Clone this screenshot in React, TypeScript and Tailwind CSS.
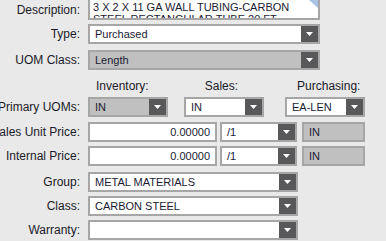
import React from 'react';

const FONT = { fontFamily: '"Liberation Sans", Arial, sans-serif' };

function Arrow() {
  return (
    <svg width="7" height="4" viewBox="0 0 7 4" className="block">
      <polygon points="0,0 7,0 3.5,4" fill="#ffffff" />
    </svg>
  );
}

function Select({ value, width, gray = false }: { value: string; width: string; gray?: boolean }) {
  return (
    <div
      className={`${width} h-[20px] flex items-stretch border-2 border-[#a6a6a6] ${gray ? 'bg-[#c0c0c0]' : 'bg-white'}`}
    >
      <div className="flex-1 flex items-center pl-[5px] text-[11px] text-[#1b1b33] whitespace-nowrap overflow-hidden">
        {value}
      </div>
      <div className="w-[17px] bg-[#58575a] flex items-center justify-center">
        <Arrow />
      </div>
    </div>
  );
}

function Field({ value, width, gray = false, right = false }: { value: string; width: string; gray?: boolean; right?: boolean }) {
  return (
    <div
      className={`${width} h-[20px] flex items-center border-2 border-[#a6a6a6] px-[5px] text-[11px] text-[#1b1b33] whitespace-nowrap overflow-hidden ${gray ? 'bg-[#c0c0c0]' : 'bg-white'} ${right ? 'justify-end' : ''}`}
    >
      {value}
    </div>
  );
}

function Row({ label, top, children }: { label: string; top: string; children: React.ReactNode }) {
  return (
    <div className={`flex items-center ${top}`}>
      <div className="w-[81px] shrink-0 flex justify-end whitespace-nowrap text-[12px] text-[#1a1a28] pr-[1px]">
        {label}
      </div>
      <div className="ml-[7px] flex items-center">{children}</div>
    </div>
  );
}

export default function App() {
  return (
    <div className="w-[386px] h-[241px] bg-[#e9e9e9] overflow-hidden" style={FONT}>
      <div className="-mt-[2px] flex flex-col">
        {/* Description */}
        <div className="flex items-center">
          <div className="w-[81px] shrink-0 flex justify-end text-[12px] text-[#1a1a28] pr-[1px] pt-[2px]">
            Description:
          </div>
          <div className="ml-[7px] relative w-[232px] h-[22px] border-2 border-[#a6a6a6] bg-white overflow-hidden">
            <div className="pl-[3px] pt-[1px] text-[11px] leading-[12px] text-[#1b1b33]">
              <div>3 X 2 X 11 GA WALL TUBING-CARBON</div>
              <div>STEEL RECTANGULAR TUBE 20 FT</div>
            </div>
            <svg width="9" height="8" viewBox="0 0 9 8" className="absolute top-0 right-0">
              <polygon points="0,0 9,0 9,8" fill="#a9c2e4" />
            </svg>
          </div>
        </div>

        <Row label="Type:" top="mt-[4px]">
          <Select value="Purchased" width="w-[232px]" />
        </Row>

        <Row label="UOM Class:" top="mt-[6px]">
          <Select value="Length" width="w-[232px]" gray />
        </Row>

        {/* column headers */}
        <div className="mt-[9px] h-[14px] flex items-center text-[12px] text-[#1a1a28] whitespace-nowrap">
          <div className="ml-[96px]">Inventory:</div>
          <div className="ml-[56px]">Sales:</div>
          <div className="ml-[59px]">Purchasing:</div>
        </div>

        <Row label="Primary UOMs:" top="mt-[4px]">
          <Select value="IN" width="w-[80px]" gray />
          <div className="ml-[16px]">
            <Select value="IN" width="w-[80px]" />
          </div>
          <div className="ml-[21px]">
            <Select value="EA-LEN" width="w-[80px]" />
          </div>
        </Row>

        <Row label="Sales Unit Price:" top="mt-[5px]">
          <Field value="0.00000" width="w-[129px]" right />
          <div className="ml-[3px]">
            <Select value="/1" width="w-[77px]" />
          </div>
          <div className="ml-[5px]">
            <Field value="IN" width="w-[63px]" gray />
          </div>
        </Row>

        <Row label="Internal Price:" top="mt-[4px]">
          <Field value="0.00000" width="w-[129px]" right />
          <div className="ml-[3px]">
            <Select value="/1" width="w-[77px]" />
          </div>
          <div className="ml-[5px]">
            <Field value="IN" width="w-[63px]" gray />
          </div>
        </Row>

        <Row label="Group:" top="mt-[6px]">
          <Select value="METAL MATERIALS" width="w-[210px]" />
        </Row>

        <Row label="Class:" top="mt-[4px]">
          <Select value="CARBON STEEL" width="w-[210px]" />
        </Row>

        <Row label="Warranty:" top="mt-[4px]">
          <Select value="" width="w-[210px]" />
        </Row>
      </div>
    </div>
  );
}
